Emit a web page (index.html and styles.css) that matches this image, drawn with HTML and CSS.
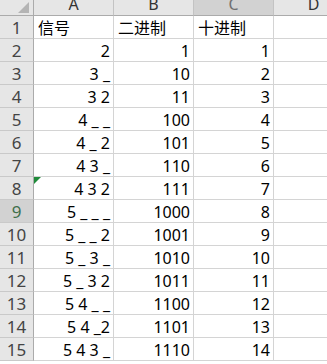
FILE: index.html
```html
<!DOCTYPE html>
<html lang="zh-CN">
<head>
  <meta charset="UTF-8">
  <title>Sheet1</title>
  <link rel="stylesheet" href="styles.css">
</head>
<body>
  <div class="sheet">
    <div class="corner"><span class="corner-mark"></span></div>
    <div class="col-head">A</div>
    <div class="col-head">B</div>
    <div class="col-head active">C</div>
    <div class="col-head">D</div>

    <div class="row-head">1</div>
    <div class="cell text">信号</div>
    <div class="cell text">二进制</div>
    <div class="cell text">十进制</div>
    <div class="cell"></div>

    <div class="row-head">2</div>
    <div class="cell">2</div>
    <div class="cell">1</div>
    <div class="cell">1</div>
    <div class="cell"></div>

    <div class="row-head">3</div>
    <div class="cell">3 _</div>
    <div class="cell">10</div>
    <div class="cell">2</div>
    <div class="cell"></div>

    <div class="row-head">4</div>
    <div class="cell">3 2</div>
    <div class="cell">11</div>
    <div class="cell">3</div>
    <div class="cell"></div>

    <div class="row-head">5</div>
    <div class="cell">4 _ _</div>
    <div class="cell">100</div>
    <div class="cell">4</div>
    <div class="cell"></div>

    <div class="row-head">6</div>
    <div class="cell">4 _ 2</div>
    <div class="cell">101</div>
    <div class="cell">5</div>
    <div class="cell"></div>

    <div class="row-head">7</div>
    <div class="cell">4 3 _</div>
    <div class="cell">110</div>
    <div class="cell">6</div>
    <div class="cell"></div>

    <div class="row-head">8</div>
    <div class="cell">4 3 2<span class="error-mark"></span></div>
    <div class="cell">111</div>
    <div class="cell">7</div>
    <div class="cell"></div>

    <div class="row-head active">9</div>
    <div class="cell">5 _ _ _</div>
    <div class="cell">1000</div>
    <div class="cell">8</div>
    <div class="cell"></div>

    <div class="row-head">10</div>
    <div class="cell">5 _ _ 2</div>
    <div class="cell">1001</div>
    <div class="cell">9</div>
    <div class="cell"></div>

    <div class="row-head">11</div>
    <div class="cell">5 _ 3 _</div>
    <div class="cell">1010</div>
    <div class="cell">10</div>
    <div class="cell"></div>

    <div class="row-head">12</div>
    <div class="cell">5 _ 3 2</div>
    <div class="cell">1011</div>
    <div class="cell">11</div>
    <div class="cell"></div>

    <div class="row-head">13</div>
    <div class="cell">5 4 _ _</div>
    <div class="cell">1100</div>
    <div class="cell">12</div>
    <div class="cell"></div>

    <div class="row-head">14</div>
    <div class="cell">5 4 _2</div>
    <div class="cell">1101</div>
    <div class="cell">13</div>
    <div class="cell"></div>

    <div class="row-head">15</div>
    <div class="cell">5 4 3 _</div>
    <div class="cell">1110</div>
    <div class="cell">14</div>
    <div class="cell"></div>
  </div>
</body>
</html>
```

FILE: styles.css
```css
/* Reset */
html, body {
  margin: 0;
  padding: 0;
  background: #fff;
  overflow: hidden;
}

.sheet {
  display: grid;
  grid-template-columns: 34px 80px 80px 80px 80px;
  grid-template-rows: 16px;
  grid-auto-rows: 23px;
  font-family: "Noto Sans", "Noto Sans CJK SC", sans-serif;
  font-size: 16px;
  color: #000;
}

.sheet > div {
  box-sizing: border-box;
  white-space: pre;
}

/* Header strip */
.corner {
  position: relative;
  background: #e6e6e6;
  border-right: 1px solid #ababab;
  border-bottom: 1px solid #ababab;
}

.corner-mark {
  position: absolute;
  right: 4px;
  bottom: 2px;
  width: 0;
  height: 0;
  border-left: 11px solid transparent;
  border-bottom: 11px solid #b4b4b4;
}

.col-head {
  background: #e6e6e6;
  border-right: 1px solid #c3c3c3;
  border-bottom: 1px solid #ababab;
  text-align: center;
  font-size: 16px;
  line-height: 9px;
  color: #333;
  overflow: hidden;
}

.col-head.active {
  background: #d2d2d2;
  color: #707070;
}

.row-head {
  background: #e6e6e6;
  border-right: 1px solid #ababab;
  border-bottom: 1px solid #c9c9c9;
  text-align: center;
  line-height: 24px;
  font-size: 17px;
  color: #444;
}

.row-head.active {
  background: #d2d2d2;
  color: #3f6f4b;
}

/* Cells */
.cell {
  position: relative;
  border-right: 1px solid #d4d4d4;
  border-bottom: 1px solid #d4d4d4;
  text-align: right;
  padding-right: 3px;
  line-height: 25px;
}

.cell.text {
  text-align: left;
  padding-left: 4px;
}

.error-mark {
  position: absolute;
  left: 0;
  top: 0;
  width: 0;
  height: 0;
  border-top: 7px solid #1f8b3a;
  border-right: 7px solid transparent;
}
```
